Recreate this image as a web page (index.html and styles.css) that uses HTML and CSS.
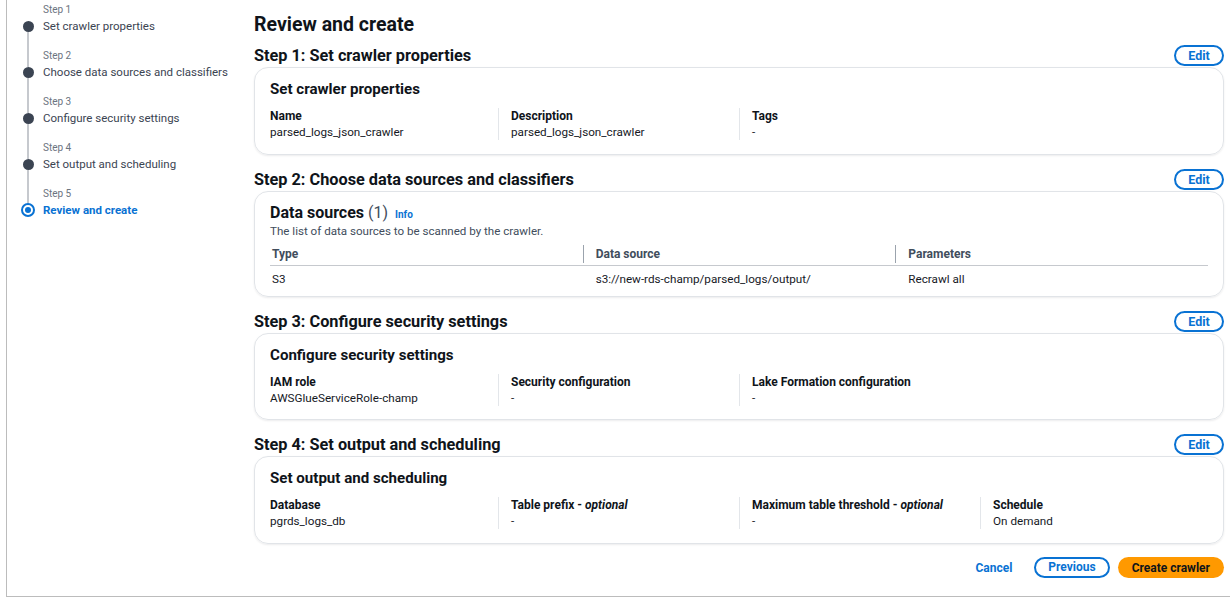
FILE: index.html
```html
<!DOCTYPE html>
<html lang="en">
<head>
<meta charset="utf-8">
<title>Review and create</title>
<link rel="stylesheet" href="styles.css">
</head>
<body>
<div class="frame">
  <nav class="steps">
    <div class="step first">
      <div class="track"><span class="seg top"></span><span class="dot"></span><span class="seg bottom"></span></div>
      <div class="step-text"><div class="step-label">Step 1</div><div class="step-title">Set crawler properties</div></div>
    </div>
    <div class="step">
      <div class="track"><span class="seg top"></span><span class="dot"></span><span class="seg bottom"></span></div>
      <div class="step-text"><div class="step-label">Step 2</div><div class="step-title">Choose data sources and classifiers</div></div>
    </div>
    <div class="step">
      <div class="track"><span class="seg top"></span><span class="dot"></span><span class="seg bottom"></span></div>
      <div class="step-text"><div class="step-label">Step 3</div><div class="step-title">Configure security settings</div></div>
    </div>
    <div class="step">
      <div class="track"><span class="seg top"></span><span class="dot"></span><span class="seg bottom"></span></div>
      <div class="step-text"><div class="step-label">Step 4</div><div class="step-title">Set output and scheduling</div></div>
    </div>
    <div class="step active last">
      <div class="track"><span class="seg top"></span><span class="ring"><span class="ring-core"></span></span></div>
      <div class="step-text"><div class="step-label">Step 5</div><div class="step-title">Review and create</div></div>
    </div>
  </nav>

  <main class="main">
    <h1 class="page-title">Review and create</h1>

    <section class="section">
      <div class="section-head"><h2 class="section-title">Step 1: Set crawler properties</h2><button class="btn-edit">Edit</button></div>
      <div class="card">
        <h3 class="card-title">Set crawler properties</h3>
        <div class="cols">
          <div class="col"><div class="k">Name</div><div class="v">parsed_logs_json_crawler</div></div>
          <div class="col"><div class="k">Description</div><div class="v">parsed_logs_json_crawler</div></div>
          <div class="col"><div class="k">Tags</div><div class="v">-</div></div>
        </div>
      </div>
    </section>

    <section class="section">
      <div class="section-head"><h2 class="section-title">Step 2: Choose data sources and classifiers</h2><button class="btn-edit">Edit</button></div>
      <div class="card card-table">
        <h3 class="card-title large">Data sources <span class="count">(1)</span> <span class="info">Info</span></h3>
        <p class="card-desc">The list of data sources to be scanned by the crawler.</p>
        <div class="table">
          <div class="th first-cell"><span class="th-in">Type</span></div>
          <div class="th"><span class="th-in divided">Data source</span></div>
          <div class="th"><span class="th-in divided">Parameters</span></div>
          <div class="td first-cell">S3</div>
          <div class="td">s3://new-rds-champ/parsed_logs/output/</div>
          <div class="td">Recrawl all</div>
        </div>
      </div>
    </section>

    <section class="section">
      <div class="section-head"><h2 class="section-title">Step 3: Configure security settings</h2><button class="btn-edit">Edit</button></div>
      <div class="card card-short">
        <h3 class="card-title">Configure security settings</h3>
        <div class="cols">
          <div class="col"><div class="k">IAM role</div><div class="v">AWSGlueServiceRole-champ</div></div>
          <div class="col"><div class="k">Security configuration</div><div class="v">-</div></div>
          <div class="col"><div class="k">Lake Formation configuration</div><div class="v">-</div></div>
        </div>
      </div>
    </section>

    <section class="section">
      <div class="section-head"><h2 class="section-title">Step 4: Set output and scheduling</h2><button class="btn-edit">Edit</button></div>
      <div class="card">
        <h3 class="card-title">Set output and scheduling</h3>
        <div class="cols">
          <div class="col"><div class="k">Database</div><div class="v">pgrds_logs_db</div></div>
          <div class="col"><div class="k">Table prefix - <em>optional</em></div><div class="v">-</div></div>
          <div class="col"><div class="k">Maximum table threshold - <em>optional</em></div><div class="v">-</div></div>
          <div class="col"><div class="k">Schedule</div><div class="v">On demand</div></div>
        </div>
      </div>
    </section>

    <div class="actions">
      <button class="btn-link">Cancel</button>
      <button class="btn-normal">Previous</button>
      <button class="btn-primary">Create crawler</button>
    </div>
  </main>
</div>
</body>
</html>
```

FILE: styles.css
```css
* { box-sizing: border-box; }

html, body {
  margin: 0;
  padding: 0;
  background: #ffffff;
}

body {
  font-family: Roboto, "Liberation Sans", Arial, sans-serif;
  font-size: 12px;
  color: #16191f;
  width: 1230px;
  height: 598px;
  overflow: hidden;
}

.frame {
  display: flex;
  margin-left: 6px;
  width: 1224px;
  height: 597px;
  border-left: 1px solid #bcbcbc;
  border-bottom: 1px solid #bcbcbc;
}

/* ---------- side navigation ---------- */
.steps {
  width: 247px;
  flex: none;
  padding: 2px 0 0 14px;
}

.step {
  display: flex;
  gap: 8px;
  height: 46px;
}

.track {
  width: 14px;
  flex: none;
  display: flex;
  flex-direction: column;
  align-items: center;
}

.seg {
  width: 2px;
  background: #c6c9ce;
}

.seg.top { height: 18.5px; flex: none; }
.seg.bottom { flex: 1; }
.step.first .seg.top { visibility: hidden; }
.step.active .seg.top { height: 17px; }

.dot {
  width: 11px;
  height: 11px;
  border-radius: 50%;
  background: #3b4452;
  flex: none;
}

.ring {
  width: 14px;
  height: 14px;
  border-radius: 50%;
  border: 2px solid #0972d3;
  display: flex;
  align-items: center;
  justify-content: center;
  flex: none;
}

.ring-core {
  width: 6px;
  height: 6px;
  border-radius: 50%;
  background: #0972d3;
}

.step-label {
  font-size: 10px;
  line-height: 16px;
  color: #6b7480;
}

.step-title {
  font-size: 11.5px;
  line-height: 16px;
  color: #3b4452;
}

.step.active .step-title {
  color: #0972d3;
  font-weight: 700;
}

/* ---------- main ---------- */
.main {
  width: 970px;
  flex: none;
  padding-top: 13px;
}

.page-title {
  margin: 0 0 8px;
  font-size: 19.5px;
  line-height: 24px;
  font-weight: 700;
  color: #0f141a;
}

.section + .section { margin-top: 14px; }

.section-head {
  display: flex;
  align-items: center;
  justify-content: space-between;
  height: 21px;
  margin-bottom: 1px;
}

.section-title {
  margin: 0;
  font-size: 16.3px;
  line-height: 21px;
  font-weight: 700;
  color: #0f141a;
}

.btn-edit, .btn-normal {
  height: 21px;
  border: 2px solid #0972d3;
  border-radius: 12px;
  background: #ffffff;
  color: #0972d3;
  font-family: inherit;
  font-size: 12px;
  font-weight: 700;
  line-height: 17px;
  padding: 0 12px;
  cursor: pointer;
}

.btn-edit { width: 50px; padding: 0; font-size: 12.5px; }

.card {
  border: 1px solid #e1e4e8;
  border-radius: 14px;
  box-shadow: 0 1px 2px rgba(0, 7, 22, 0.08);
  padding: 11px 15px 14px;
}

.card.card-table { padding-bottom: 4px; }
.card.card-short { padding-bottom: 13px; }

.card-title {
  margin: 0;
  font-size: 15.1px;
  line-height: 20px;
  font-weight: 700;
  color: #0f141a;
}

.card-title.large {
  font-size: 16px;
  height: 20px;
}

.count {
  font-weight: 400;
  color: #414d5c;
  line-height: 1;
}

.info {
  font-size: 10px;
  font-weight: 700;
  color: #0972d3;
  margin-left: 3px;
  line-height: 1;
}

.card-desc {
  margin: 0;
  font-size: 11.6px;
  line-height: 16px;
  color: #414d5c;
}

.cols {
  display: grid;
  grid-template-columns: 228px 241px 241px 1fr;
  margin-top: 9px;
}

.col + .col {
  border-left: 1px solid #e3e6ea;
  padding-left: 12px;
}

.k {
  font-weight: 700;
  line-height: 16px;
  color: #0f141a;
}

.k em { font-weight: 700; font-style: italic; }

.v {
  font-size: 11.7px;
  line-height: 16px;
  color: #16191f;
}

/* table */
.table {
  display: grid;
  grid-template-columns: 1fr 1fr 1fr;
  margin-top: 4px;
}

.th {
  height: 23px;
  border-bottom: 1px solid #c6c9ce;
  display: flex;
  align-items: center;
}

.th-in {
  font-weight: 700;
  color: #414d5c;
  line-height: 16px;
}

.th-in.divided {
  border-left: 1px solid #9ba3ad;
  padding-left: 12px;
  line-height: 18px;
}

.th.first-cell .th-in { padding-left: 2px; }

.td {
  height: 26px;
  line-height: 26px;
  padding-left: 13px;
  font-size: 11.7px;
  color: #16191f;
}

.td.first-cell { padding-left: 2px; }

/* actions */
.actions {
  display: flex;
  justify-content: flex-end;
  align-items: center;
  gap: 8px;
  margin-top: 13px;
}

.btn-link {
  border: 0;
  background: transparent;
  color: #0972d3;
  font-family: inherit;
  font-size: 12px;
  font-weight: 700;
  padding: 0 14px;
  height: 21px;
  cursor: pointer;
}

.btn-primary {
  height: 21px;
  border: 0;
  border-radius: 12px;
  background: #ff9900;
  color: #0f141a;
  font-family: inherit;
  font-size: 12px;
  font-weight: 700;
  padding: 0 14px;
  cursor: pointer;
}
```
